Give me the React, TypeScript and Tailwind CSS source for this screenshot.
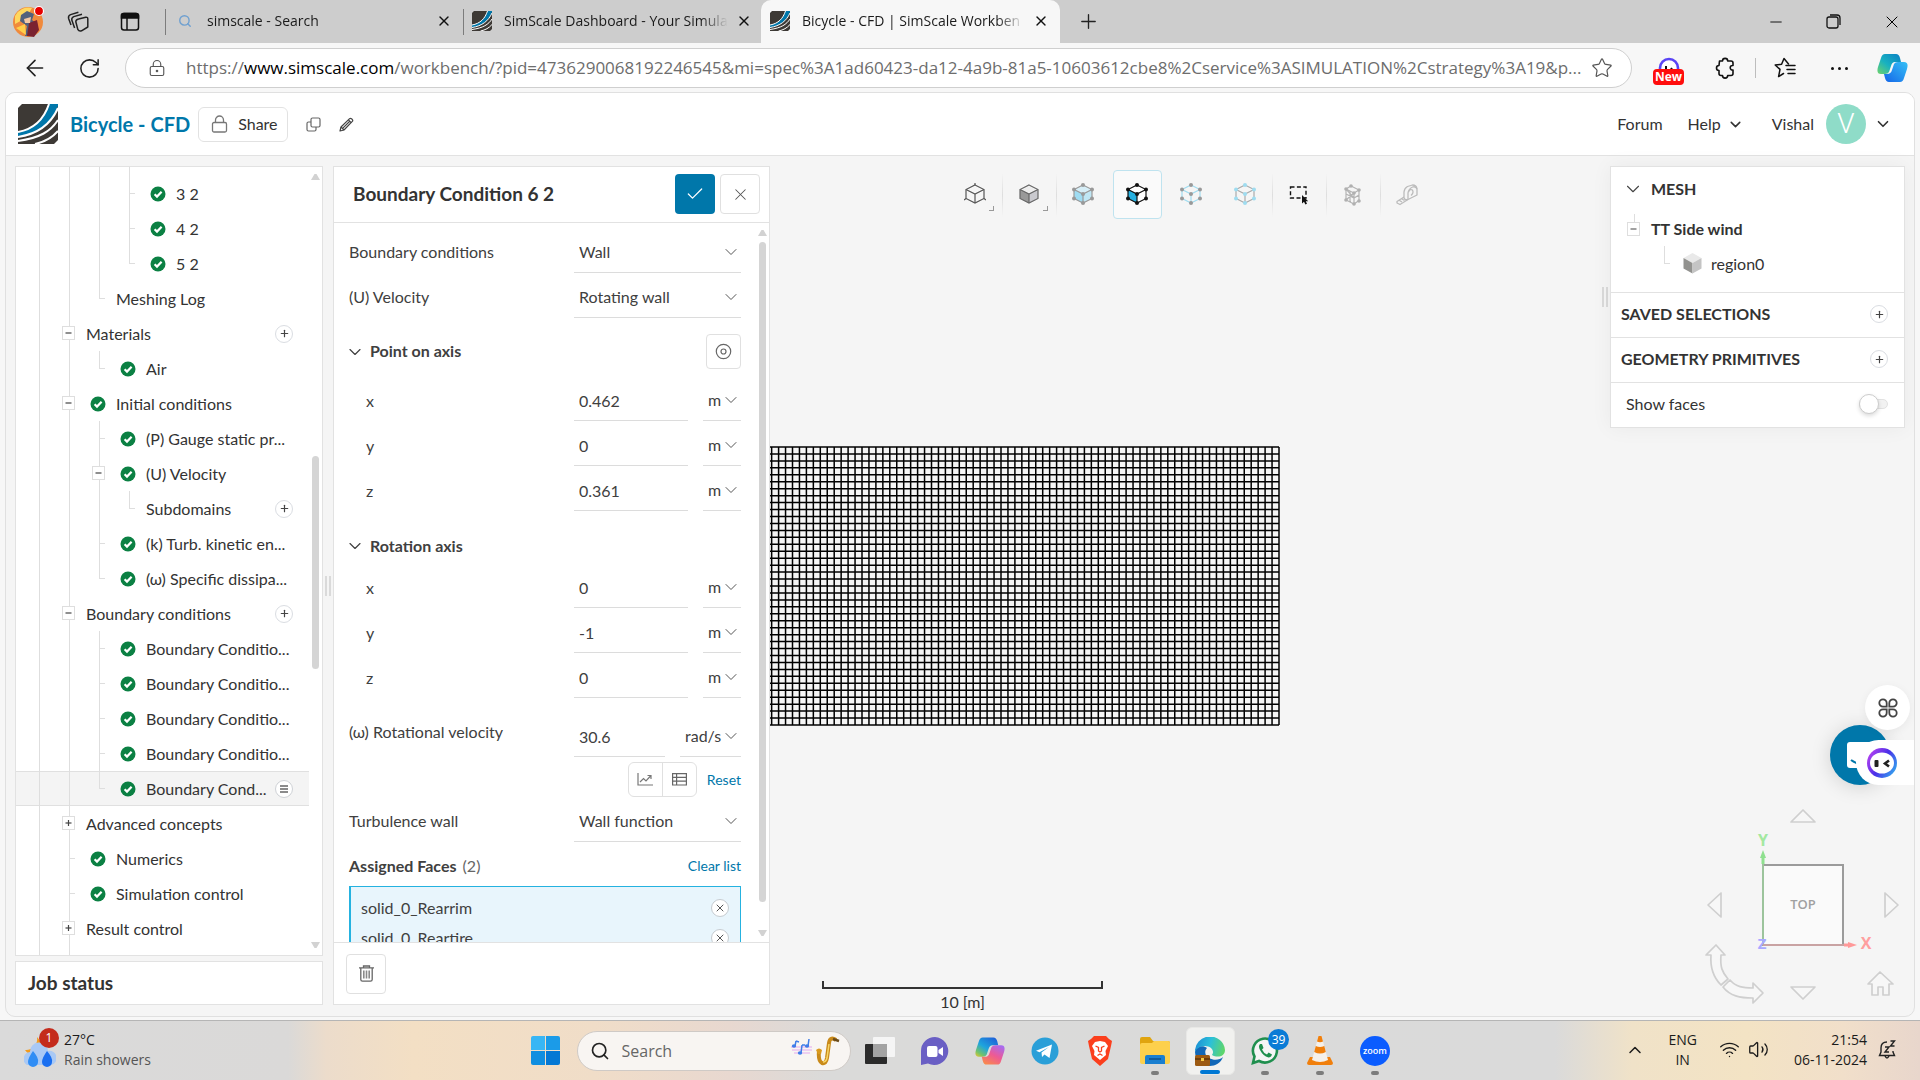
import React from "react";
import {
  ArrowLeft,
  RotateCw,
  LockKeyhole,
  Star,
  X,
  Plus,
  Minus,
  Search,
  ChevronDown,
  ChevronUp,
  Check,
  Wifi,
  Volume2,
} from "lucide-react";

const UI = "font-['Open_Sans','Noto_Sans',sans-serif]";
const APP = "font-['Lato',sans-serif]";

/* ---------- shared drawings ---------- */

function Logo({ size }: { size: number }) {
  return (
    <svg width={size} height={size} viewBox="0 0 40 40" aria-hidden="true">
      <path d="M4 0H40V36L36 40H0V4Z" fill="#3d3935" />
      <path d="M31 0H40V2C33 20 20 30 0 33V28C17 25 26 15 31 0Z" fill="#0077aa" />
      <path d="M31 0C26 15 17 25 0 28" stroke="#fff" strokeWidth="2" fill="none" />
      <path d="M40 4C33 20 20 30 0 33" stroke="#fff" strokeWidth="2" fill="none" />
      <path d="M40 16C33 27 22 34 0 37" stroke="#fff" strokeWidth="2" fill="none" />
      <path d="M40 27C34 34 27 38 17 40" stroke="#fff" strokeWidth="2" fill="none" />
    </svg>
  );
}

function OkBadge() {
  return (
    <svg width="16" height="16" viewBox="0 0 16 16" className="shrink-0" aria-hidden="true">
      <circle cx="8" cy="8" r="7.5" fill="#0b8043" />
      <path d="M4.600 8.200L7 10.600L11.600 5.800" stroke="#fff" strokeWidth="2.200" fill="none" />
    </svg>
  );
}

function RoundPlus({ label }: { label: string }) {
  return (
    <button
      aria-label={label}
      className="flex size-[18px] shrink-0 items-center justify-center rounded-full border border-[#dadde2] bg-white text-[#444]"
    >
      <Plus size={11} strokeWidth={2.6} />
    </button>
  );
}

function ScrollArrow({ down }: { down?: boolean }) {
  return (
    <svg width="9" height="7" viewBox="0 0 9 7" aria-hidden="true">
      <path d={down ? "M0 0H9L5.500 6H3.500Z" : "M0 7H9L5.500 1H3.500Z"} fill="#d2d2d2" />
    </svg>
  );
}

/* ---------- browser chrome ---------- */

function Tab({ icon, title, active }: { icon: React.ReactNode; title: string; active?: boolean }) {
  return (
    <div
      className={
        active
          ? "flex h-full w-[299px] items-center rounded-t-[10px] bg-[#f7f7f7] pb-px pl-2 pr-[10px]"
          : "flex h-full w-[298px] items-center border-l border-[#7c7c7c] pb-px pl-2 pr-[10px] [border-image:linear-gradient(transparent_22%,#7c7c7c_22%,#7c7c7c_80%,transparent_80%)_1]"
      }
    >
      <span className="flex w-[21px] justify-center">{icon}</span>
      <span className="ml-3 flex-1 whitespace-nowrap text-sm text-[#1b1b1b] [mask-image:linear-gradient(90deg,#000_88%,transparent)]">
        {title}
      </span>
      <button aria-label={"Close " + title} className="ml-2 flex size-[18px] items-center justify-center text-[#111]">
        <X size={16} strokeWidth={2} />
      </button>
    </div>
  );
}

function TabStrip() {
  return (
    <div className="flex h-[43px] shrink-0 items-center bg-[#cdcdcd]">
      <svg width="34" height="36" viewBox="0 0 34 36" className="ml-3 shrink-0" role="img" aria-label="Profile">
        <circle cx="16" cy="18" r="15" fill="#f08a3c" />
        <path d="M3 12A15 15 0 0 1 20 4L14 14L3 20Z" fill="#ffd75e" />
        <path d="M9 11L15 7L22 10L20 16L24 19L20 32H13L15 22L8 17Z" fill="#53617c" />
        <path d="M17 19L25 16L27 26L22 33L15 32Z" fill="#7a2230" />
        <path d="M12 15L19 13L18 19L13 19Z" fill="#f3c8a4" />
        <path d="M4 24L13 20L14 31Z" fill="#ffcf4a" />
        <circle cx="27" cy="7" r="4.500" fill="#e60000" stroke="#fff" strokeWidth="1.200" />
      </svg>
      <button aria-label="Workspaces" className="ml-[21px]">
        <svg width="22" height="22" viewBox="0 0 22 22" fill="none" stroke="#222" strokeWidth="1.500" strokeLinejoin="round">
          <path d="M11.500 8L18.800 6.200Q20.800 6 20.800 8V16L14.500 19.800Q12 20.600 10.800 18.400L8.800 10.800Q8.800 8.600 11.500 8Z" />
          <path d="M7.600 17L4.800 9Q4.400 6.600 6.800 5.600L15 3.300" />
          <path d="M4 14L1.600 7.400Q1 4.600 3.600 3.600L11.400 1.200" />
        </svg>
      </button>
      <button aria-label="Tab actions" className="ml-[31px]">
        <svg width="20" height="20" viewBox="0 0 20 20" fill="none" stroke="#111" strokeWidth="1.500">
          <rect x="1.500" y="1.500" width="17" height="16.500" rx="2.500" />
          <path d="M1.500 2.500Q2 1.500 4 1.500H16Q18 1.500 18.500 3V6H1.500Z" fill="#111" />
          <path d="M7 6V18" />
        </svg>
      </button>
      <div className="ml-[25px] flex h-full">
        <Tab icon={<Search size={14} strokeWidth={2.4} className="text-[#6fa0d0]" />} title="simscale - Search" />
        <Tab icon={<Logo size={20} />} title="SimScale Dashboard - Your Simula" />
        <Tab icon={<Logo size={20} />} title="Bicycle - CFD | SimScale Workben" active />
      </div>
      <button aria-label="New tab" className="ml-[17px] text-[#222]">
        <Plus size={23} strokeWidth={1.4} />
      </button>
      <div className="ml-auto flex items-center gap-[41px] pr-[18px] text-black">
        <button aria-label="Minimize">
          <Minus size={18} strokeWidth={1.2} />
        </button>
        <button aria-label="Restore">
          <svg width="15" height="15" viewBox="0 0 15 15" fill="none" stroke="#111" strokeWidth="1.300">
            <rect x="1" y="3" width="11" height="11" rx="2" />
            <path d="M4 1H11Q14 1 14 4V11" />
          </svg>
        </button>
        <button aria-label="Close window">
          <X size={20} strokeWidth={1.2} />
        </button>
      </div>
    </div>
  );
}

function AddressRow() {
  return (
    <div className="flex h-[49px] shrink-0 items-center bg-[#f7f7f7] pt-px">
      <button aria-label="Back" className="ml-[22px] text-[#222]">
        <ArrowLeft size={26} strokeWidth={1.5} />
      </button>
      <button aria-label="Refresh" className="ml-[30px] text-[#222]">
        <RotateCw size={23} strokeWidth={1.6} />
      </button>
      <div className="ml-6 flex h-10 min-w-0 flex-1 items-center rounded-full border border-[#cfcfcf] bg-white pb-px pl-[22px] pr-[18px]">
        <LockKeyhole size={18} strokeWidth={1.5} className="shrink-0 text-[#555]" />
        <p className="ml-5 min-w-0 flex-1 whitespace-nowrap text-[17px] text-[#6d6d6d]">
          https://<span className="text-black">www.simscale.com</span>
          /workbench/?pid=4736290068192246545&mi=spec%3A1ad60423-da12-4a9b-81a5-10603612cbe8%2Cservice%3ASIMULATION%2Cstrategy%3A19&p...
        </p>
        <button aria-label="Add to favorites" className="text-[#555]">
          <Star size={22} strokeWidth={1.3} />
        </button>
      </div>
      <button aria-label="Assistant extension" className="ml-[21px] flex w-[31px] flex-col items-center pt-[6px]">
        <svg width="22" height="16" viewBox="0 0 22 16" aria-hidden="true">
          <path d="M2 16V11A9 9 0 0 1 20 11V16" fill="#fff" stroke="#5a44f5" strokeWidth="2.600" />
          <path d="M8 9V13M14 11L12.500 13" stroke="#111" strokeWidth="2" />
        </svg>
        <span className="-mt-1 w-full rounded bg-[#ff0d0d] text-center text-xs font-bold leading-4 text-white">New</span>
      </button>
      <button aria-label="Extensions" className="ml-[31px]">
        <svg width="20" height="22" viewBox="0 0 20 22" fill="none" stroke="#111" strokeWidth="1.600" strokeLinejoin="round">
          <path d="M4.500 4H7.500A2.600 2.600 0 1 1 12.700 4H16Q18 4 18 6V8.500A2.300 2.300 0 1 0 18 13V16.500Q18 18.500 16 18.500H12.700A2.600 2.600 0 1 1 7.500 18.500H6Q4 18.500 4 16.500V13.500A2.500 2.500 0 1 1 4 8.500Z" />
        </svg>
      </button>
      <div className="ml-5 h-5 w-px bg-[#bdbdbd]" />
      <button aria-label="Favorites" className="ml-[18px]">
        <svg width="23" height="22" viewBox="0 0 23 22" fill="none" stroke="#111" strokeWidth="1.500" strokeLinejoin="round" strokeLinecap="round">
          <path d="M14.500 7L10 1.500L7.600 7.200L1.200 8L6 12.400L4.600 19.600L9.500 16.500" />
          <path d="M12 8.500H21M13 12.500H21M14 16.500H21" />
        </svg>
      </button>
      <button aria-label="Settings and more" className="ml-[34px] flex gap-1">
        <span className="size-[3px] rounded-full bg-[#111]" />
        <span className="size-[3px] rounded-full bg-[#111]" />
        <span className="size-[3px] rounded-full bg-[#111]" />
      </button>
      <button aria-label="Copilot" className="ml-[29px] mr-3">
        <CopilotEdge />
      </button>
    </div>
  );
}

function CopilotEdge() {
  return (
    <svg width="31" height="28" viewBox="0 0 31 28">
      <defs>
        <linearGradient id="ceA" x1="0" y1="1" x2="1" y2="0">
          <stop offset="0" stopColor="#6fd36b" />
          <stop offset=".45" stopColor="#18b1c0" />
          <stop offset="1" stopColor="#0a7fc4" />
        </linearGradient>
        <linearGradient id="ceB" x1="0" y1="1" x2="1" y2="0">
          <stop offset="0" stopColor="#1565e8" />
          <stop offset="1" stopColor="#35c0f6" />
        </linearGradient>
      </defs>
      <path d="M8 0H19Q22 0 23 4L24 8H18Q15 8 14 12L12 18Q11 20 8 20H4Q-1 20 1 13L4 4Q5 0 8 0Z" fill="url(#ceA)" />
      <path d="M23 28H12Q9 28 8 24L7 20H10Q14 20 15 16L17 10Q18 8 21 8H27Q32 8 30 15L27 24Q26 28 23 28Z" fill="url(#ceB)" />
    </svg>
  );
}

/* ---------- app header ---------- */

function AppHeader() {
  return (
    <header className="flex h-[63px] shrink-0 items-center border-b border-[#e2e2e2] bg-white pl-3 text-base text-[#333]">
      <Logo size={40} />
      <h1 className="ml-3 text-[20px] font-bold text-[#0077aa]">Bicycle - CFD</h1>
      <button className="ml-2 flex h-[35px] w-[90px] items-center rounded-md border border-[#e2e2e2] pl-3">
        <svg width="17" height="18" viewBox="0 0 17 18" fill="none" stroke="#777" strokeWidth="1.300">
          <rect x="1.500" y="7.500" width="14" height="9.500" rx="1.500" />
          <path d="M4.500 7.500V5A4 4 0 0 1 12.500 5V7.500" />
        </svg>
        <span className="ml-[10px]">Share</span>
      </button>
      <button aria-label="Duplicate project" className="ml-[18px]">
        <svg width="15" height="15" viewBox="0 0 15 15" fill="none" stroke="#666" strokeWidth="1.200">
          <rect x="5" y="1" width="9" height="9" rx="1.500" />
          <path d="M5 5H2.500Q1 5 1 6.500V12.500Q1 14 2.500 14H8.500Q10 14 10 12.500V10" />
        </svg>
      </button>
      <button aria-label="Edit project" className="ml-[18px]">
        <svg width="15" height="15" viewBox="0 0 15 15" fill="none" stroke="#444" strokeWidth="1.200" strokeLinejoin="round">
          <path d="M1 14L2 10L10.600 1.600Q11.600 .8 12.800 2L13.200 2.400Q14.200 3.400 13.300 4.400L5 13Z" />
          <path d="M2 10L5 13M9.400 2.800L12.200 5.600M3.600 11.400L11 4" />
        </svg>
      </button>
      <nav className="ml-auto flex items-center pr-[22px]">
        <a href="#forum">Forum</a>
        <button className="ml-[25px] flex items-center gap-[6px]">
          Help <ChevronDown size={17} strokeWidth={2.2} />
        </button>
        <button className="ml-7 flex items-center">
          Vishal
          <span className="ml-[12px] flex size-10 items-center justify-center rounded-full bg-[#8fdcc8] font-['Roboto',sans-serif] text-[28px] font-light text-white">
            V
          </span>
          <ChevronDown size={18} strokeWidth={2.2} className="ml-2" />
        </button>
      </nav>
    </header>
  );
}

/* ---------- simulation tree ---------- */

type Node = {
  guides: string; // v line, t tee, l corner, m minus box, p plus box
  label: string;
  ok?: boolean;
  add?: boolean;
  selected?: boolean;
};

const NODES: Node[] = [
  { guides: "vvvt", label: "3 2", ok: true },
  { guides: "vvvt", label: "4 2", ok: true },
  { guides: "vvvl", label: "5 2", ok: true },
  { guides: "vvl", label: "Meshing Log" },
  { guides: "vm", label: "Materials", add: true },
  { guides: "vvl", label: "Air", ok: true },
  { guides: "vm", label: "Initial conditions", ok: true },
  { guides: "vvt", label: "(P) Gauge static pr...", ok: true },
  { guides: "vvm", label: "(U) Velocity", ok: true },
  { guides: "vvvl", label: "Subdomains", add: true },
  { guides: "vvt", label: "(k) Turb. kinetic en...", ok: true },
  { guides: "vvl", label: "(ω) Specific dissipa...", ok: true },
  { guides: "vm", label: "Boundary conditions", add: true },
  { guides: "vvt", label: "Boundary Conditio...", ok: true },
  { guides: "vvt", label: "Boundary Conditio...", ok: true },
  { guides: "vvt", label: "Boundary Conditio...", ok: true },
  { guides: "vvt", label: "Boundary Conditio...", ok: true },
  { guides: "vvl", label: "Boundary Cond...", ok: true, selected: true },
  { guides: "vp", label: "Advanced concepts" },
  { guides: "vt", label: "Numerics", ok: true },
  { guides: "vt", label: "Simulation control", ok: true },
  { guides: "vp", label: "Result control" },
];

function Guide({ kind, height = 35 }: { kind: string; height?: number }) {
  const box = kind === "m" || kind === "p";
  return (
    <svg width="30" height={height} viewBox={"0 0 30 " + height} className="shrink-0" aria-hidden="true">
      <path d={kind === "l" ? "M15.500 0V18" : "M15.500 0V" + height} stroke="#dedede" />
      {(kind === "t" || kind === "l") && <path d="M16 17.500H21" stroke="#dedede" />}
      {box && (
        <>
          <rect x="8.500" y="10.500" width="12" height="13" fill="#fff" stroke="#dedede" />
          <path d="M11.500 17H17.500" stroke="#444" strokeWidth="1.200" />
          {kind === "p" && <path d="M14.500 14V20" stroke="#444" strokeWidth="1.200" />}
        </>
      )}
    </svg>
  );
}

function Tree() {
  return (
    <section aria-label="Simulation tree" className="flex min-h-0 flex-1 overflow-hidden border border-[#e2e2e2] bg-white">
      <div className="min-w-0 flex-1">
        <div className="flex h-[9px] pl-2">
          {["a", "b", "c", "d"].map((k) => (
            <Guide key={k} kind="v" height={9} />
          ))}
        </div>
        <ul>
          {NODES.map((n, i) => (
            <li
              key={i}
              className={
                n.selected
                  ? "flex h-[35px] items-center bg-[#f4f4f4] pl-2 pr-4 shadow-[inset_0_1px_#e0e0e0,inset_0_-1px_#e0e0e0]"
                  : "flex h-[35px] items-center pl-2 pr-4"
              }
            >
              {n.guides.split("").map((g, j) => (
                <Guide key={j} kind={g} />
              ))}
              <button
                className={
                  n.ok
                    ? "flex flex-1 items-center gap-[10px] whitespace-nowrap pl-[6px] text-left"
                    : "flex flex-1 items-center whitespace-nowrap pl-[2px] text-left"
                }
              >
                {n.ok && <OkBadge />}
                {n.label}
              </button>
              {n.add && <RoundPlus label={"Add to " + n.label} />}
              {n.selected && (
                <button
                  aria-label="Item menu"
                  className="flex size-[18px] shrink-0 items-center justify-center rounded-full border border-[#cfd2d6] bg-white"
                >
                  <svg width="8" height="8" viewBox="0 0 8 8">
                    <path d="M0 1H8M0 4H8M0 7H8" stroke="#666" strokeWidth="1.400" />
                  </svg>
                </button>
              )}
            </li>
          ))}
        </ul>
        <div className="flex pl-2">
          <Guide kind="v" height={12} />
          <Guide kind="v" height={12} />
        </div>
      </div>
      <div className="flex w-[13px] flex-col items-center pb-[6px] pt-[6px]">
        <ScrollArrow />
        <div className="mt-[276px] h-[213px] w-[7px] rounded-full bg-[#d5d5d5]" />
        <div className="flex-1" />
        <ScrollArrow down />
      </div>
    </section>
  );
}

/* ---------- boundary condition form ---------- */

function SelectField({ id, value, wide }: { id: string; value: string; wide?: boolean }) {
  return (
    <div className="relative border-b border-[#dcdcdc]">
      <select
        id={id}
        aria-label={wide ? undefined : "Unit of " + id}
        className={
          wide
            ? "block h-10 w-full appearance-none bg-transparent pl-[5px] pr-6"
            : "block h-10 w-full appearance-none bg-transparent pl-[5px]"
        }
      >
        <option>{value}</option>
      </select>
      <ChevronDown
        size={20}
        strokeWidth={1.2}
        className="pointer-events-none absolute right-0 top-[10px] text-[#555]"
      />
    </div>
  );
}

function SelectRow({ id, label, value }: { id: string; label: string; value: string }) {
  return (
    <div className="flex h-[45px] shrink-0 items-start">
      <label htmlFor={id} className="flex h-10 flex-1 items-center">
        {label}
      </label>
      <div className="w-[167px]">
        <SelectField id={id} value={value} wide />
      </div>
    </div>
  );
}

function AxisRow({ id, label, value }: { id: string; label: string; value: string }) {
  return (
    <div className="flex h-[45px] items-start pl-[17px]">
      <label htmlFor={id} className="flex h-[42px] flex-1 items-center">
        {label}
      </label>
      <input
        id={id}
        defaultValue={value}
        className="h-[41px] w-[114px] border-b border-[#dcdcdc] bg-transparent pl-[5px] pt-px outline-none"
      />
      <div className="ml-[15px] w-[38px]">
        <SelectField id={id + "-unit"} value="m" />
      </div>
    </div>
  );
}

function FormPanel() {
  return (
    <section
      aria-label="Boundary Condition 6 2"
      className="flex w-[437px] shrink-0 flex-col border border-[#e2e2e2] bg-white text-[#404040]"
    >
      <header className="flex h-[56px] shrink-0 items-center border-b border-[#e2e2e2] pb-px pl-[19px] pr-[9px]">
        <h2 className="flex-1 text-[19px] font-bold text-[#333]">Boundary Condition 6 2</h2>
        <button aria-label="Apply" className="flex size-10 items-center justify-center rounded bg-[#0077aa] text-white">
          <Check size={20} strokeWidth={1.5} />
        </button>
        <button
          aria-label="Close"
          className="ml-[5px] flex size-10 items-center justify-center rounded border border-[#e0e0e0] text-[#555]"
        >
          <X size={19} strokeWidth={1.3} />
        </button>
      </header>
      <div className="flex min-h-0 flex-1">
        <form className="flex min-w-0 flex-1 flex-col overflow-hidden pl-[15px] pr-3 pt-[9px]">
          <SelectRow id="bc-type" label="Boundary conditions" value="Wall" />
          <SelectRow id="bc-velocity" label="(U) Velocity" value="Rotating wall" />
          <div className="mt-3 flex h-[35px] shrink-0 items-center font-bold">
            <ChevronDown size={20} strokeWidth={1.4} className="-ml-1" />
            <h3 className="ml-[5px] flex-1 pb-[2px]">Point on axis</h3>
            <button
              type="button"
              aria-label="Pick point"
              className="flex size-[35px] items-center justify-center rounded border border-[#e0e0e0]"
            >
              <svg width="17" height="17" viewBox="0 0 17 17" fill="none" stroke="#666" strokeWidth="1.200">
                <circle cx="8.500" cy="8.500" r="7.200" />
                <circle cx="8.500" cy="8.500" r="2.500" />
              </svg>
            </button>
          </div>
          <div className="mt-[11px]">
            <AxisRow id="point-x" label="x" value="0.462" />
            <AxisRow id="point-y" label="y" value="0" />
            <AxisRow id="point-z" label="z" value="0.361" />
          </div>
          <div className="mt-[13px] flex h-[35px] shrink-0 items-center font-bold">
            <ChevronDown size={20} strokeWidth={1.4} className="-ml-1" />
            <h3 className="ml-[5px] flex-1">Rotation axis</h3>
          </div>
          <div className="mt-1">
            <AxisRow id="axis-x" label="x" value="0" />
            <AxisRow id="axis-y" label="y" value="-1" />
            <AxisRow id="axis-z" label="z" value="0" />
          </div>
          <div className="mt-[14px] flex h-[46px] shrink-0 items-start">
            <label htmlFor="omega" className="flex h-8 flex-1 items-center">
              (ω) Rotational velocity
            </label>
            <input
              id="omega"
              defaultValue="30.6"
              className="h-[41px] w-[91px] border-b border-[#dcdcdc] bg-transparent pl-[5px] pt-px outline-none"
            />
            <div className="ml-[15px] w-[61px]">
              <SelectField id="omega-unit" value="rad/s" />
            </div>
          </div>
          <div className="flex h-[35px] shrink-0 items-center justify-end">
            <div className="flex h-[35px] w-[69px] divide-x divide-[#e0e0e0] rounded-md border border-[#e0e0e0]">
              <button type="button" aria-label="Formula input" className="flex flex-1 items-center justify-center">
                <svg width="16" height="13" viewBox="0 0 16 13" fill="none" stroke="#777" strokeWidth="1.200">
                  <path d="M1 0V12H16M3 9L6.500 5.500L9 8L13.500 3M10.500 2.500H14V6" />
                </svg>
              </button>
              <button type="button" aria-label="Table input" className="flex flex-1 items-center justify-center">
                <svg width="15" height="13" viewBox="0 0 15 13" fill="none" stroke="#666" strokeWidth="1.200">
                  <path d="M.6 .6H14.400V12H.6ZM.6 4.400H14.400M.6 8.200H14.400M4.600 .6V12" />
                </svg>
              </button>
            </div>
            <button type="button" className="ml-[10px] text-sm text-[#0077aa]">
              Reset
            </button>
          </div>
          <div className="mt-1 shrink-0">
            <SelectRow id="turb-wall" label="Turbulence wall" value="Wall function" />
          </div>
          <div className="flex h-10 shrink-0 items-center">
            <h3>
              <b>Assigned Faces</b> <span className="ml-[2px] text-[#666]">(2)</span>
            </h3>
            <button type="button" className="ml-auto text-sm text-[#0077aa]">
              Clear list
            </button>
          </div>
          <ul className="shrink-0 border border-l-2 border-[#25b2e0] bg-[#e8f5fc] pb-2 pl-[10px] pr-[11px] pt-[6px]">
            {["solid_0_Rearrim", "solid_0_Reartire"].map((f) => (
              <li key={f} className="flex h-[30px] items-center justify-between">
                {f}
                <button
                  type="button"
                  aria-label={"Remove " + f}
                  className="flex size-[18px] items-center justify-center rounded-full border border-[#c6cbd0] bg-white text-[#555]"
                >
                  <X size={12} strokeWidth={2} />
                </button>
              </li>
            ))}
          </ul>
        </form>
        <div className="flex w-4 shrink-0 flex-col items-center gap-[6px] pb-[5px] pl-[3px] pt-[6px]">
          <ScrollArrow />
          <div className="w-[7px] flex-1 rounded-full bg-[#d5d5d5]" />
          <div className="h-4" />
          <ScrollArrow down />
        </div>
      </div>
      <footer className="flex h-[62px] shrink-0 items-center border-t border-[#e2e2e2] pl-3">
        <button aria-label="Delete" className="flex size-10 items-center justify-center rounded border border-[#e0e0e0]">
          <svg width="15" height="17" viewBox="0 0 15 17" fill="none" stroke="#666" strokeWidth="1.300">
            <path d="M0 2.800H15M4.500 2.500V1H10.500V2.500M1.800 3V14.500Q1.800 16.200 3.500 16.200H11.500Q13.200 16.200 13.200 14.500V3" />
            <path d="M4.800 5.500V13.500M7.500 5.500V13.500M10.200 5.500V13.500" stroke="#8a8a8a" strokeWidth="1.600" />
          </svg>
        </button>
      </footer>
    </section>
  );
}

/* ---------- viewport ---------- */

type CubeProps = {
  top?: string;
  left?: string;
  right?: string;
  line: string;
  dot?: string;
  axes?: boolean;
};

function Cube({ top = "none", left = "none", right = "none", line, dot, axes }: CubeProps) {
  const pts = [
    [11, 2],
    [20, 6.5],
    [20, 15.5],
    [11, 20],
    [2, 15.5],
    [2, 6.5],
    [11, 11],
  ];
  return (
    <svg width="22" height="23" viewBox="0 0 22 23" aria-hidden="true">
      <path d="M11 2L20 6.500L11 11L2 6.500Z" fill={top} />
      <path d="M2 6.500L11 11V20L2 15.500Z" fill={left} />
      <path d="M20 6.500L11 11V20L20 15.500Z" fill={right} />
      <path d="M11 2L20 6.500V15.500L11 20L2 15.500V6.500Z" fill="none" stroke={line} strokeWidth="1.200" />
      <path d="M2 6.500L11 11L20 6.500M11 11V20" fill="none" stroke={line} strokeWidth="1.200" />
      {axes && <path d="M11 2V0M2 15.500L0 17M20 15.500L22 17" stroke={line} strokeWidth="1.200" />}
      {dot && pts.map((p, i) => <circle key={i} cx={p[0]} cy={p[1]} r="2" fill={dot} />)}
    </svg>
  );
}

function Tool({ label, menu, active, children }: { label: string; menu?: boolean; active?: boolean; children: React.ReactNode }) {
  return (
    <button
      aria-label={label}
      className={
        active
          ? "flex h-[49px] w-[49px] items-center justify-center rounded border border-[#bfe3ef] bg-[#fafafa]"
          : "relative flex h-[49px] w-[49px] items-center justify-center"
      }
    >
      {children}
      {menu && <span className="absolute bottom-2 right-[6px] size-[5px] border-b border-r border-[#999]" />}
    </button>
  );
}

function Divider() {
  return <div className="mx-[2px] h-[44px] w-px bg-gradient-to-b from-transparent via-[#dedede] to-transparent" />;
}

function Toolbar() {
  return (
    <div role="toolbar" aria-label="View tools" className="flex items-center justify-center pl-[10px] pt-1">
      <Tool label="View orientation" menu>
        <Cube line="#555" axes />
      </Tool>
      <Divider />
      <Tool label="Render mode" menu>
        <Cube line="#666" top="#eee" left="#999" right="#c9c9ce" />
      </Tool>
      <Divider />
      <Tool label="Select volumes">
        <Cube line="#999" top="#d6eef7" left="#9fdcf2" right="#bfe6f4" dot="#999" />
      </Tool>
      <div className="w-[5px]" />
      <Tool label="Select faces" active>
        <Cube line="#111" top="#fff" left="#27b0e0" right="#fff" dot="#111" />
      </Tool>
      <div className="w-[5px]" />
      <Tool label="Select edges">
        <Cube line="#9fdcf0" dot="#999" />
      </Tool>
      <div className="w-[5px]" />
      <Tool label="Select vertices">
        <Cube line="#aaa" dot="#9fdcf0" />
      </Tool>
      <Divider />
      <Tool label="Box selection">
        <svg width="20" height="20" viewBox="0 0 20 20" aria-hidden="true">
          <rect x="1.500" y="2" width="15.500" height="11" fill="none" stroke="#111" strokeWidth="1.400" strokeDasharray="4 2.400" />
          <path d="M13 10V18.500L15 16.800L16.400 19.600L18 18.800L16.800 16.200H19.200Z" fill="#111" />
        </svg>
      </Tool>
      <Divider />
      <Tool label="Clip mesh">
        <svg width="20" height="22" viewBox="0 0 20 22" fill="none" stroke="#b4b4b4" strokeWidth="1.200" aria-hidden="true">
          <path d="M3 5L11 9V20L3 16ZM3 5L8 2L16 6V16.500L11 20M11 9L16 6M3 10L11 14L16 11M7 7V18M3 16L11 9M3 5L11 14" />
          {[[3, 5], [8, 2], [16, 6], [11, 9], [3, 16], [16, 17], [11, 20]].map((p, i) => (
            <circle key={i} cx={p[0]} cy={p[1]} r="1.800" fill="#b0b0b0" stroke="none" />
          ))}
        </svg>
      </Tool>
      <Divider />
      <Tool label="Measure">
        <svg width="22" height="22" viewBox="0 0 22 22" fill="none" stroke="#bbb" strokeWidth="1.300" strokeLinejoin="round" aria-hidden="true">
          <path d="M8 14V8Q8.500 4 11.500 2.500L16.500 1Q20.500 1 21 5V11L12 15.500Q9 16.500 8 14Z" />
          <path d="M12 15V9Q12.500 5 16.500 3Q20 2 21 5M12.500 8Q14 4.500 16.500 6Q18 9 15 11.500" />
          <path d="M8 13L1 17.500V19L4 20.500L12 15.500M3.500 16.500L6 18M6 15L8.500 16.500" />
        </svg>
      </Tool>
    </div>
  );
}

function MeshGrid() {
  const w = 510;
  const h = 280;
  const rows = 40;
  const step = (h - 2) / rows;
  const cols = Math.floor(w / step);
  const lines: React.ReactNode[] = [];
  for (let i = 0; i <= cols; i++) {
    const x = w - 1 - i * step;
    lines.push(<path key={"c" + i} d={"M" + x + " 1V" + (h - 1)} />);
  }
  for (let i = 0; i <= rows; i++) {
    const y = 1 + i * step;
    lines.push(<path key={"r" + i} d={"M0 " + y + "H" + (w - 1)} />);
  }
  return (
    <svg width={w} height={h} viewBox={"0 0 " + w + " " + h} stroke="#000" strokeWidth="1.500" role="img" aria-label="Mesh">
      {lines}
    </svg>
  );
}

function ViewCube() {
  return (
    <svg width="200" height="204" viewBox="0 0 200 204" fill="none" role="img" aria-label="Orientation cube, top view">
      <rect x="63" y="65" width="80" height="80" fill="#fafafa" stroke="#9b9b9b" strokeWidth="2" />
      <path d="M63 145V64" stroke="#9cc49c" strokeWidth="2" />
      <path d="M63 64V56" stroke="#8fe08f" strokeWidth="3" />
      <path d="M60 58L63 50L66 58Z" fill="#8fe08f" />
      <path d="M63 145H144" stroke="#c9a3a3" strokeWidth="2" />
      <path d="M144 145H150" stroke="#f99" strokeWidth="3" />
      <path d="M148 142L157 145L148 148Z" fill="#f99" />
      <g className="font-['Open_Sans',sans-serif]" textAnchor="middle">
        <text x="63" y="46" fontSize="16" fontWeight="700" fill="#a3e8a0">Y</text>
        <text x="166" y="149" fontSize="16" fontWeight="700" fill="#ff9f9f">X</text>
        <text x="62" y="149" fontSize="15" fontWeight="700" fill="#a9a9ff">Z</text>
        <text x="103" y="109" fontSize="13" fontWeight="600" fill="#a0a0a0">TOP</text>
      </g>
      <g stroke="#cfcfcf" strokeWidth="1.700" strokeLinejoin="round" fill="#f7f7f7">
        <path d="M91 22L103 10L115 22Z" />
        <path d="M91 187H115L103 199Z" />
        <path d="M21 93V117L8 105Z" />
        <path d="M185 93V117L198 105Z" />
        <path d="M180 172L168 184H172V195H178V187H183V195H189V184H193Z" />
        <path d="M16 145L25 155H21C20 167 22 172 28 179L21 185C13 177 10 168 11 155H6Z" />
        <path d="M23 187L30 180C36 187 43 188 53 188V183L63 193L53 203V198C40 198 30 196 23 187Z" />
      </g>
    </svg>
  );
}

function Viewport() {
  return (
    <main className="relative min-w-0 flex-1">
      <Toolbar />
      <div className="absolute left-0 top-[280px]">
        <MeshGrid />
      </div>
      <div className="absolute left-[52px] top-[815px] w-[281px]">
        <div className="h-2 border-x-2 border-b-2 border-[#333]" />
        <p className="mt-px text-center text-base leading-6 text-[#333]">10 [m]</p>
      </div>
    </main>
  );
}

/* ---------- right panel ---------- */

function ScenePanel() {
  return (
    <aside className="w-[295px] border border-[#e2e2e2] bg-white text-[#333] shadow-[0_0_20px_rgba(0,0,0,0.05)]">
      <div className="h-[126px] border-b border-[#e2e2e2] pt-1">
        <div className="flex h-[36px] items-center pl-[11px]">
          <ChevronDown size={22} strokeWidth={1.2} className="text-[#444]" />
          <h2 className="ml-[7px] font-bold">MESH</h2>
        </div>
        <div className="flex h-[39px] items-center pl-2 pt-1">
          <svg width="30" height="34" viewBox="0 0 30 34" aria-hidden="true">
            <path d="M15.500 2V12" stroke="#dedede" />
            <rect x="8.500" y="10.500" width="12" height="13" fill="#fff" stroke="#dedede" />
            <path d="M11.500 17H17.500" stroke="#444" strokeWidth="1.200" />
          </svg>
          <span className="ml-[2px] font-bold">TT Side wind</span>
        </div>
        <div className="flex h-[35px] items-center pl-[38px]">
          <Guide kind="l" />
          <svg width="19" height="21" viewBox="0 0 19 21" className="ml-1" aria-hidden="true">
            <path d="M9.500 0L18.500 5L9.500 10L.5 5Z" fill="#e9e9e9" />
            <path d="M.5 5L9.500 10V20.500L.5 15.500Z" fill="#92928f" />
            <path d="M18.500 5L9.500 10V20.500L18.500 15.500Z" fill="#c4c4c4" />
          </svg>
          <span className="ml-[9px]">region0</span>
        </div>
      </div>
      {["SAVED SELECTIONS", "GEOMETRY PRIMITIVES"].map((t) => (
        <div key={t} className="flex h-[45px] items-center justify-between border-b border-[#e2e2e2] pb-[2px] pl-[10px] pr-4">
          <h2 className="font-bold">{t}</h2>
          <RoundPlus label={"Add to " + t} />
        </div>
      ))}
      <label className="flex h-[44px] cursor-pointer items-center justify-between pb-[2px] pl-[15px] pr-4">
        Show faces
        <input type="checkbox" role="switch" className="peer sr-only" />
        <span className="flex h-[10px] w-[29px] items-center rounded-full border border-[#e2e2e2] bg-[#f2f2f2]">
          <span className="-ml-[1px] size-5 shrink-0 rounded-full border border-[#ccc] bg-white shadow-[0_2px_4px_rgba(0,0,0,0.15)]" />
        </span>
      </label>
    </aside>
  );
}

function Floaters() {
  return (
    <>
      <button
        aria-label="Open chat"
        className="absolute right-[24px] top-[632px] flex size-[60px] items-center justify-center rounded-full bg-[#0077aa] shadow-[0_2px_20px_rgba(0,0,0,0.15)]"
      >
        <svg width="27" height="28" viewBox="0 0 27 28" aria-hidden="true">
          <rect x="0" y="1" width="27" height="26" rx="3" fill="#fff" />
          <path d="M4 19Q13 26 23 19" stroke="#0077aa" strokeWidth="2" fill="none" />
        </svg>
      </button>
      <button
        aria-label="Assistant"
        className="absolute right-0 top-[647px] flex h-[45px] w-[58px] items-center rounded-l-full bg-white pl-[10px]"
      >
        <svg width="32" height="32" viewBox="0 0 32 32" aria-hidden="true">
          <defs>
            <linearGradient id="bot" x1="0" y1="0.300" x2="1" y2="0.900">
              <stop offset="0" stopColor="#b040f0" />
              <stop offset=".45" stopColor="#4a30e8" />
              <stop offset="1" stopColor="#30b8f0" />
            </linearGradient>
          </defs>
          <circle cx="16" cy="16" r="15" fill="url(#bot)" />
          <ellipse cx="16" cy="16" rx="12" ry="10.500" fill="#fff" />
          <rect x="8.500" y="13" width="4" height="7" rx="1" fill="#222" />
          <path d="M23 13.500L19 16.500L23 19.500" stroke="#222" strokeWidth="2.600" fill="none" />
        </svg>
      </button>
      <button
        aria-label="App shortcuts"
        className="absolute right-[4px] top-[592px] flex size-[45px] items-center justify-center rounded-full bg-white shadow-[0_2px_10px_rgba(0,0,0,0.06)]"
      >
        <svg width="20" height="20" viewBox="0 0 20 20" fill="none" stroke="#444" strokeWidth="1.800" aria-hidden="true">
          <path d="M5 1.300A3.700 3.700 0 0 1 8.700 5V8.700H5A3.700 3.700 0 0 1 5 1.300ZM15 1.300A3.700 3.700 0 0 1 15 8.700H11.300V5A3.700 3.700 0 0 1 15 1.300ZM5 18.700A3.700 3.700 0 0 1 5 11.300H8.700V15A3.700 3.700 0 0 1 5 18.700ZM15 18.700A3.700 3.700 0 0 1 11.300 15V11.300H15A3.700 3.700 0 0 1 15 18.700Z" />
        </svg>
      </button>
      <div className="absolute bottom-[12px] right-[14px]">
        <ViewCube />
      </div>
    </>
  );
}

function Grip() {
  return (
    <div className="flex gap-[2px]">
      <span className="h-5 w-[2px] bg-[#dadada]" />
      <span className="h-5 w-[2px] bg-[#dadada]" />
    </div>
  );
}

/* ---------- taskbar ---------- */

function TaskIcon({ label, mark, children }: { label: string; mark?: string; children: React.ReactNode }) {
  return (
    <button
      aria-label={label}
      className={
        mark === "active"
          ? "mx-[3px] flex h-12 w-[49px] flex-col items-center justify-between rounded-md border border-[#e8e8e6] bg-[#f1f1ef] pt-[9px]"
          : "flex h-12 w-[55px] flex-col items-center justify-between pt-[9px]"
      }
    >
      <span className="flex h-[30px] items-center">{children}</span>
      <span
        className={
          mark === "active"
            ? "h-1 w-5 rounded-full bg-[#0078d4]"
            : mark
              ? "h-1 w-2 rounded-full bg-[#7c7c7c]"
              : "h-1 w-2"
        }
      />
    </button>
  );
}

function Taskbar() {
  return (
    <footer className="flex h-[60px] shrink-0 items-center border-t border-[#b5b5b5] bg-[linear-gradient(90deg,#dadada_0%,#dad9d8_15%,#ecdccb_17%,#f3dfc4_21.5%,#f0ddc8_31%,#e8d8d0_38%,#dadad9_43%,#dadada_81%,#f0e2c8_85%,#f3e3c4_91%,#f1dfca_96%,#e8d6cc_100%)]">
      <div className="flex flex-1 basis-0 pb-[2px] pl-6">
        <button className="flex items-center text-left text-[14px] leading-[20px] text-[#555]">
          <span className="relative">
            <svg width="32" height="38" viewBox="0 0 32 38" aria-hidden="true">
              <path d="M13 6A11 11 0 0 1 1 19A13 13 0 0 0 20 22L18 12Z" fill="#f39a1c" />
              <path d="M3 34A7 7 0 0 1 6 21A9 9 0 0 1 24 20A7 7 0 0 1 27 34Z" fill="#a9c9f5" />
              <path d="M9 20Q15 27 14 31A5 5 0 0 1 4 31Q4 27 9 20Z" fill="#2f8df5" />
              <path d="M23 20Q29 27 28 31A5 5 0 0 1 18 31Q18 27 23 20Z" fill="#1a6ff0" />
            </svg>
            <span className="absolute -top-[3px] left-[15px] flex size-5 items-center justify-center rounded-full bg-[#c42b1c] text-xs text-white">
              1
            </span>
          </span>
          <span className="ml-2">
            <span className="block text-[#1b1b1b]">27°C</span>
            <span className="block">Rain showers</span>
          </span>
        </button>
      </div>
      <div className="flex items-center pl-[13px]">
        <button aria-label="Start" className="mr-[17px] grid grid-cols-2 gap-[1px]">
          <span className="size-[14px] rounded-tl-[2px] bg-[#38b6f5]" />
          <span className="size-[14px] rounded-tr-[2px] bg-[#1b9be8]" />
          <span className="size-[14px] rounded-bl-[2px] bg-[#108ee0]" />
          <span className="size-[14px] rounded-br-[2px] bg-[#0478d4]" />
        </button>
        <label className="flex h-10 w-[274px] items-center rounded-full border border-[#cfcac6] bg-[#f8f5f2] pl-[12px] pr-[10px]">
          <Search size={20} strokeWidth={2} className="shrink-0 text-[#222]" />
          <input
            aria-label="Search"
            placeholder="Search"
            className="ml-3 min-w-0 flex-1 bg-transparent text-base outline-none placeholder:text-[#666]"
          />
          <svg width="50" height="30" viewBox="0 0 50 30" fill="none" aria-hidden="true">
            <path d="M1 11H22M2 14H22M4 17H20" stroke="#e3a9ee" strokeWidth="1.200" />
            <path d="M6 5L5 10M12 9L11 17M19 3L18 10" stroke="#3f7de8" strokeWidth="1.500" />
            <path d="M6 5L9 6M12 9L15 9" stroke="#3f7de8" strokeWidth="1.500" />
            <ellipse cx="4" cy="10" rx="2.200" ry="1.800" fill="#3f7de8" />
            <ellipse cx="10" cy="17" rx="2.200" ry="1.800" fill="#3f7de8" />
            <ellipse cx="17" cy="10" rx="2.200" ry="1.800" fill="#3f7de8" />
            <path d="M46 4Q40 0 39 7L37 22Q36 28 32 27Q28 25 29 15" stroke="#c98a1a" strokeWidth="4" />
            <path d="M39 8L37 22Q36 26 33 26" stroke="#f7d566" strokeWidth="1.500" />
            <path d="M26 14Q29 11 32 14L31 18H28Z" fill="#d99a1e" />
            <path d="M43 3L49 5" stroke="#6b4b1a" strokeWidth="2.500" />
          </svg>
        </label>
        <div className="ml-[2px] flex">
          <TaskIcon label="Task view">
            <svg width="30" height="28" viewBox="0 0 30 28">
              <rect x="0" y="7" width="22" height="20" rx="1" fill="#2b2b2b" />
              <rect x="8" y="0" width="22" height="20" rx="1" fill="#f7f7f7" fillOpacity=".9" />
              <rect x="8" y="7" width="14" height="13" fill="#a3a3a3" />
            </svg>
          </TaskIcon>
          <TaskIcon label="Chat">
            <svg width="28" height="28" viewBox="0 0 28 28">
              <path d="M14 0A14 14 0 1 1 7 26.500L0 28V14A14 14 0 0 1 14 0Z" fill="#6a5fc4" />
              <rect x="6" y="9" width="10.500" height="11" rx="2" fill="#fff" />
              <path d="M17.500 13L22 10V19L17.500 16Z" fill="#fff" />
            </svg>
          </TaskIcon>
          <TaskIcon label="Copilot">
            <svg width="30" height="28" viewBox="0 0 31 28">
              <defs>
                <linearGradient id="tcA" x1=".8" y1="0" x2="0" y2="1">
                  <stop offset="0" stopColor="#1e63d8" />
                  <stop offset=".5" stopColor="#1fa5dd" />
                  <stop offset=".8" stopColor="#74c36a" />
                  <stop offset="1" stopColor="#f0c62c" />
                </linearGradient>
                <linearGradient id="tcB" x1=".8" y1="0" x2=".2" y2="1">
                  <stop offset="0" stopColor="#a76bf0" />
                  <stop offset=".5" stopColor="#ee5a94" />
                  <stop offset="1" stopColor="#f98a4b" />
                </linearGradient>
              </defs>
              <path d="M8 0H19Q22 0 23 4L24 8H18Q15 8 14 12L12 18Q11 20 8 20H4Q-1 20 1 13L4 4Q5 0 8 0Z" fill="url(#tcA)" />
              <path d="M23 28H12Q9 28 8 24L7 20H10Q14 20 15 16L17 10Q18 8 21 8H27Q32 8 30 15L27 24Q26 28 23 28Z" fill="url(#tcB)" />
            </svg>
          </TaskIcon>
          <TaskIcon label="Telegram">
            <svg width="28" height="28" viewBox="0 0 28 28">
              <circle cx="14" cy="14" r="13.500" fill="#2a9fd8" />
              <path d="M5 13.800L21 7.500L18.500 21L13.500 17.500L11 20L10.500 15.500L18 10L8.500 15.200Z" fill="#fff" />
            </svg>
          </TaskIcon>
          <TaskIcon label="Brave">
            <svg width="26" height="30" viewBox="0 0 26 30">
              <path d="M7 0H19L22 3L25 5L24 10L21 23L13 30L5 23L2 10L1 5L4 3Z" fill="#fb3f1d" />
              <path d="M8 6L13 5L18 6L21 10L18.500 15L19 19L13 24L7 19L7.500 15L5 10Z" fill="#fff" />
              <path d="M8.500 10L11.500 11.500L11.500 15L13 16L14.500 15L14.500 11.500L17.500 10M10.500 19.500L13 18L15.500 19.500" stroke="#fb3f1d" strokeWidth="1.300" fill="none" />
            </svg>
          </TaskIcon>
          <TaskIcon label="File Explorer" mark="open">
            <svg width="30" height="27" viewBox="0 0 30 27">
              <path d="M0 2Q0 0 2 0H10L13 4H28Q30 4 30 6V12H0Z" fill="#e0a40f" />
              <path d="M0 8Q0 6 2 6H12L14 4H28Q30 4 30 6V25Q30 27 28 27H2Q0 27 0 25Z" fill="#fdd04c" />
              <path d="M5 20Q5 18 7 18H23Q25 18 25 20V27H5Z" fill="#1a7fd0" />
              <path d="M9 22H21" stroke="#0c4f8c" strokeWidth="1.500" />
            </svg>
          </TaskIcon>
          <TaskIcon label="Edge" mark="active">
            <svg width="30" height="29" viewBox="0 0 30 29">
              <defs>
                <linearGradient id="edg" x1="0" y1="0.300" x2="1" y2=".5">
                  <stop offset="0" stopColor="#1b8fd6" />
                  <stop offset=".5" stopColor="#2cc0d8" />
                  <stop offset="1" stopColor="#5fd66a" />
                </linearGradient>
              </defs>
              <path d="M0 15C1 9 8 8 12 11C9 14 10 19 14 21C19 24 25 23 28 20C26 26 20 29 15 29A15 14.500 0 0 1 0 15Z" fill="#1268b8" />
              <path d="M0 15A15 14.500 0 0 1 30 13C30 20 22 21 17 18C20 14 16 9 10 9C5 9 1 12 0 15Z" fill="url(#edg)" />
              <rect x="0" y="18" width="15" height="11" rx="1.500" fill="#9c5a12" />
              <path d="M0 22H15" stroke="#5e350a" strokeWidth="1.500" />
              <rect x="6" y="21" width="3" height="3" fill="#f6c945" />
            </svg>
          </TaskIcon>
          <TaskIcon label="WhatsApp, 39 unread" mark="open">
            <span className="relative">
              <svg width="30" height="29" viewBox="0 0 30 29">
                <path d="M3 27L4.500 20.500A12 12 0 1 1 9 25Z" fill="#f5f5f5" stroke="#1f8f4e" strokeWidth="2.600" />
                <path d="M10 8Q8 10 10 14Q13 20 18.500 21.500Q21 21.500 22 18.500L18.500 16.500L17 18.500Q13.500 17 12 13.500L13.500 12L12 8Z" fill="#1f8f4e" />
              </svg>
              <span className="absolute -right-[9px] -top-[7px] flex size-[21px] items-center justify-center rounded-full bg-[#0a7bd6] text-xs text-white">
                39
              </span>
            </span>
          </TaskIcon>
          <TaskIcon label="VLC" mark="open">
            <svg width="26" height="29" viewBox="0 0 26 29">
              <path d="M3 21H23L26 27Q26 29 24 29H2Q0 29 0 27Z" fill="#f07f0c" />
              <path d="M11.500 0H14.500L21 24Q13 28 5 24Z" fill="#f5f0ea" />
              <path d="M11.500 0H14.500L16 5.500Q13 7 10 5.500ZM8.800 10Q13 12 17.300 10L18.800 16Q13 19 7.200 16Z" fill="#f07f0c" />
            </svg>
          </TaskIcon>
          <TaskIcon label="Zoom" mark="open">
            <span className="flex size-[30px] items-center justify-center rounded-full bg-[#0b5cff] text-[9px] font-semibold text-white">
              zoom
            </span>
          </TaskIcon>
        </div>
      </div>
      <div className="flex flex-1 basis-0 items-center justify-end pb-[2px] pr-6 text-[14px] leading-[20px] text-[#1b1b1b]">
        <button aria-label="Show hidden icons">
          <ChevronUp size={20} strokeWidth={1.8} />
        </button>
        <p className="ml-[23px] text-center">
          ENG
          <br />
          IN
        </p>
        <Wifi size={21} strokeWidth={1.6} className="ml-[22px]" />
        <Volume2 size={21} strokeWidth={1.5} className="ml-2" />
        <p className="ml-[25px] text-right">
          21:54
          <br />
          06-11-2024
        </p>
        <svg width="18" height="20" viewBox="0 0 18 20" fill="none" stroke="#222" strokeWidth="1.400" className="ml-[11px]" aria-hidden="true">
          <path d="M9 2Q3 2 3 8V12L1.500 15.500H16.500L15 12V11M7 16Q9 20 11 16" />
          <path d="M7 7H11L7 12H11M12.500 1H16.500L12.500 6H16.500" />
        </svg>
      </div>
    </footer>
  );
}

/* ---------- page ---------- */

export default function App() {
  return (
    <div className={"flex h-screen flex-col overflow-hidden bg-[#f7f7f7] " + UI}>
      <TabStrip />
      <AddressRow />
      <div
        className={
          "relative mx-[5px] mb-[3px] flex min-h-0 flex-1 flex-col overflow-hidden rounded-[10px] border border-[#e0e0e0] bg-[#f5f5f5] text-base text-[#333] " +
          APP
        }
      >
        <AppHeader />
        <div className="flex min-h-0 flex-1 pb-[11px] pl-[9px] pr-[9px] pt-[10px]">
          <div className="flex w-[308px] shrink-0 flex-col gap-[5px]">
            <Tree />
            <section className="flex h-[44px] shrink-0 items-center border border-[#e2e2e2] bg-white pl-3">
              <h2 className="text-[19px] font-bold">Job status</h2>
            </section>
          </div>
          <div className="flex w-[10px] shrink-0 items-center justify-center">
            <Grip />
          </div>
          <FormPanel />
          <Viewport />
          <div className="flex h-[262px] items-center">
            <Grip />
            <div className="w-[2px]" />
            <ScenePanel />
          </div>
        </div>
        <Floaters />
      </div>
      <Taskbar />
    </div>
  );
}
